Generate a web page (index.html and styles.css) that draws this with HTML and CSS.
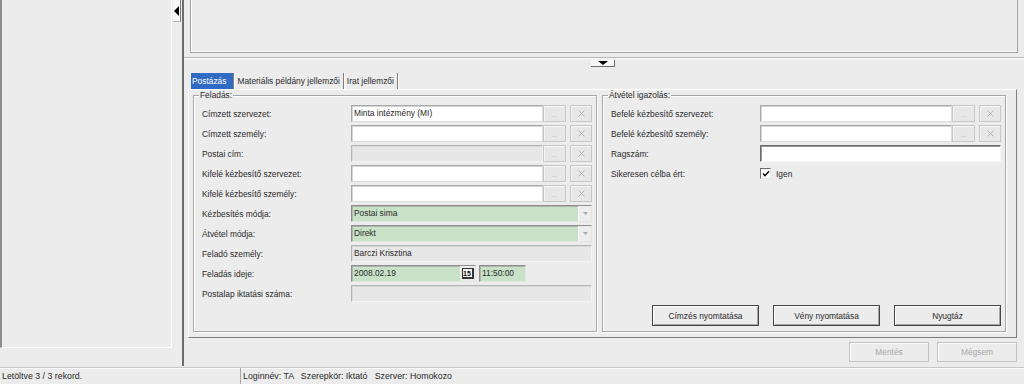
FILE: index.html
```html
<!DOCTYPE html>
<html lang="hu">
<head>
    <meta charset="UTF-8">
    <title>Postázás</title>
    <link rel="stylesheet" href="styles.css">
</head>
<body>
<div class="app">
    <div class="main">
        <div class="tree"></div>
        <div class="vsplit">
            <span class="vbtn"><svg width="5" height="10" viewBox="0 0 5 10"><polygon points="5,0 5,10 0,5" fill="#000"/></svg></span>
        </div>
        <div class="work">
            <div class="preview"></div>
            <div class="hsplit">
                <span class="hbtn"><svg width="10" height="4" viewBox="0 0 10 4"><polygon points="0,0 10,0 5,4" fill="#000"/></svg></span>
            </div>
            <div class="tabs">
                <span class="tab on">Postázás</span>
                <span class="tab">Materiális példány jellemzői</span>
                <span class="tab">Irat jellemzői</span>
            </div>
            <div class="tabpage">
                <fieldset class="group">
                    <legend>Feladás:</legend>
                    <div class="form">
                        <span class="lbl">Címzett szervezet:</span>
                        <div class="ctl"><span class="inp">Minta intézmény (MI)</span><span class="dots">...</span><span class="x"><svg width="7" height="7" viewBox="0 0 7 7"><path d="M0.5 0.5L6.5 6.5M6.5 0.5L0.5 6.5" stroke="#b4b4b4" stroke-width="1"/></svg></span></div>

                        <span class="lbl">Címzett személy:</span>
                        <div class="ctl"><span class="inp"></span><span class="dots">...</span><span class="x"><svg width="7" height="7" viewBox="0 0 7 7"><path d="M0.5 0.5L6.5 6.5M6.5 0.5L0.5 6.5" stroke="#b4b4b4" stroke-width="1"/></svg></span></div>

                        <span class="lbl">Postai cím:</span>
                        <div class="ctl"><span class="inp off"></span><span class="dots">...</span><span class="x"><svg width="7" height="7" viewBox="0 0 7 7"><path d="M0.5 0.5L6.5 6.5M6.5 0.5L0.5 6.5" stroke="#b4b4b4" stroke-width="1"/></svg></span></div>

                        <span class="lbl">Kifelé kézbesítő szervezet:</span>
                        <div class="ctl"><span class="inp"></span><span class="dots">...</span><span class="x"><svg width="7" height="7" viewBox="0 0 7 7"><path d="M0.5 0.5L6.5 6.5M6.5 0.5L0.5 6.5" stroke="#b4b4b4" stroke-width="1"/></svg></span></div>

                        <span class="lbl">Kifelé kézbesítő személy:</span>
                        <div class="ctl"><span class="inp"></span><span class="dots">...</span><span class="x"><svg width="7" height="7" viewBox="0 0 7 7"><path d="M0.5 0.5L6.5 6.5M6.5 0.5L0.5 6.5" stroke="#b4b4b4" stroke-width="1"/></svg></span></div>

                        <span class="lbl">Kézbesítés módja:</span>
                        <div class="ctl"><span class="inp green">Postai sima</span><span class="drop"><svg width="5" height="3" viewBox="0 0 5 3"><polygon points="0,0 5,0 2.5,3" fill="#a8a8a8"/></svg></span></div>

                        <span class="lbl">Átvétel módja:</span>
                        <div class="ctl"><span class="inp green">Direkt</span><span class="drop"><svg width="5" height="3" viewBox="0 0 5 3"><polygon points="0,0 5,0 2.5,3" fill="#a8a8a8"/></svg></span></div>

                        <span class="lbl">Feladó személy:</span>
                        <div class="ctl"><span class="inp off">Barczi Krisztina</span></div>

                        <span class="lbl">Feladás ideje:</span>
                        <div class="ctl"><span class="inp green date">2008.02.19<span class="cal"><span class="calico">15</span></span></span><span class="inp green time">11:50:00</span></div>

                        <span class="lbl">Postalap iktatási száma:</span>
                        <div class="ctl"><span class="inp off"></span></div>
                    </div>
                </fieldset>
                <fieldset class="group">
                    <legend>Átvétel igazolás:</legend>
                    <div class="form">
                        <span class="lbl">Befelé kézbesítő szervezet:</span>
                        <div class="ctl"><span class="inp"></span><span class="dots">...</span><span class="x"><svg width="7" height="7" viewBox="0 0 7 7"><path d="M0.5 0.5L6.5 6.5M6.5 0.5L0.5 6.5" stroke="#b4b4b4" stroke-width="1"/></svg></span></div>

                        <span class="lbl">Befelé kézbesítő személy:</span>
                        <div class="ctl"><span class="inp"></span><span class="dots">...</span><span class="x"><svg width="7" height="7" viewBox="0 0 7 7"><path d="M0.5 0.5L6.5 6.5M6.5 0.5L0.5 6.5" stroke="#b4b4b4" stroke-width="1"/></svg></span></div>

                        <span class="lbl">Ragszám:</span>
                        <div class="ctl"><span class="inp sunk"></span></div>

                        <span class="lbl">Sikeresen célba ért:</span>
                        <div class="ctl chk"><span class="box"><svg width="8" height="8" viewBox="0 0 8 8"><path d="M1 3.5L3 5.8L7 1.2" stroke="#000" stroke-width="1.4" fill="none"/></svg></span>Igen</div>
                    </div>
                    <div class="btnrow">
                        <button class="btn">Címzés nyomtatása</button>
                        <button class="btn">Vény nyomtatása</button>
                        <button class="btn">Nyugtáz</button>
                    </div>
                </fieldset>
            </div>
            <div class="actions">
                <button class="btn dis">Mentés</button>
                <button class="btn dis">Mégsem</button>
            </div>
        </div>
    </div>
    <div class="status">
        <span class="seg first">Letöltve 3 / 3 rekord.</span>
        <span class="seg">Loginnév: TA   Szerepkör: Iktató   Szerver: Homokozo</span>
    </div>
</div>
</body>
</html>
```

FILE: styles.css
```css
*{box-sizing: border-box;}
body{margin: 0;background: #ececec;font-family: "Liberation Sans", Arial, sans-serif;font-size: 8.4px;color: #2a2a2a;}

.app{width: 1024px;height: 384px;display: flex;flex-direction: column;overflow: hidden;}
.main{height: 367px;display: flex;}

/* bal oldali lista */
.tree{width: 172px;height: 348px;border-left: 2px solid #8e8e8e;border-right: 1px solid #fff;border-bottom: 1px solid #fff;}
.vsplit{width: 10px;padding-left: 1px;}
.vbtn{display: flex;align-items: center;justify-content: center;width: 8px;height: 22px;background: #f7f7f7;border-right: 1px solid #7a7a7a;border-bottom: 1px solid #b8b8b8;}

/* jobb oldal */
.work{flex: 1;border-left: 2px solid #6c6c6c;padding: 0 6px 0 4px;display: flex;flex-direction: column;}
.preview{height: 53px;margin-left: 2px;border: 1px solid #a3a3a3;border-top: none;box-shadow: inset 1px 0 0 #fff, inset 0 -1px 0 #fff;}
.hsplit{height: 19px;padding-top: 4px;display: flex;flex-direction: column;align-items: center;}
.hsplit:before{content: "";align-self: stretch;margin: 0 -6px 0 -4px;border-top: 1px solid #b6b6b6;border-bottom: 1px solid #fff;}
.hbtn{margin-top: 1px;width: 24px;height: 7px;background: #f7f7f7;border-right: 1px solid #6e6e6e;border-bottom: 1px solid #6e6e6e;display: flex;align-items: center;justify-content: center;}

.tabs{height: 17px;display: flex;padding: 0 0 0 3px;}
.tab{padding: 0 3px;line-height: 17px;border-right: 1px solid #7e7e7e;box-shadow: 1px 0 0 #fff;height: 16px;margin-top: 1px;}
.tab.on{background: #316ac5;color: #fff;padding: 0 7px 0 1px;}

.tabpage{height: 249px;display: flex;gap: 5px;padding: 0 10px 5px 4px;border: 1px solid;border-color: #fff #7c7c7c #7c7c7c #fff;margin-right: 1px;}

.group{margin: 0;width: 404px;min-width: 0;padding: 5px 4px 5px 8px;border: 1px solid #a6a6a6;box-shadow: inset 1px 1px 0 #fff, 1px 1px 0 #fff;display: flex;flex-direction: column;}
.group legend{padding: 0 1px;margin-left: -3px;line-height: 10px;background: #ececec;}

.form{display: grid;grid-template-columns: 149px 1fr;grid-auto-rows: 17px;row-gap: 3px;align-items: center;}
.lbl{white-space: nowrap;}
.ctl{display: flex;height: 17px;}

.inp{flex: 1;height: 17px;background: #fff;border: 1px solid;border-color: #a9a9a9 #dcdcdc #dcdcdc #a9a9a9;box-shadow: inset 1px 1px 0 #d4d4d4;padding: 0 2px;line-height: 15px;white-space: nowrap;}
.inp.off{background: #e7e7e7;border-color: #b4b4b4 #f4f4f4 #f4f4f4 #b4b4b4;box-shadow: inset 1px 1px 0 #dadada;}
.inp.green{background: #c8e2c8;border-color: #8e8e8e #e4e4e4 #e4e4e4 #8e8e8e;box-shadow: inset 1px 1px 0 #b2b2b2;}
.inp.sunk{border-color: #6a6a6a #f8f8f8 #f8f8f8 #6a6a6a;box-shadow: inset 1px 1px 0 #9a9a9a;}
.inp.date{flex: none;width: 125px;display: flex;justify-content: space-between;padding-right: 0;}
.inp.time{flex: none;width: 47px;margin-left: 3px;}

.dots,.x{height: 17px;background: #e7e7e7;border: 1px solid #c6c6c6;box-shadow: inset 1px 1px 0 #f6f6f6;}
.dots{width: 23px;text-align: center;color: #b2b2b2;line-height: 17px;font-size: 7px;}
.x{width: 22px;margin-left: 4px;display: flex;align-items: center;justify-content: center;}
.drop{width: 13px;height: 15px;margin: 1px 1px 0 -14px;background: #ededed;border-left: 1px solid #f8f8f8;display: flex;align-items: center;justify-content: center;}

.cal{width: 15px;height: 15px;background: #ececec;display: flex;align-items: center;justify-content: center;}
.calico{width: 12px;height: 11px;border: 1px solid #333;border-bottom-width: 2px;border-right-width: 2px;background: #f4f4f4;font-size: 7px;font-weight: bold;line-height: 9px;text-align: center;color: #111;}

.chk{align-items: center;gap: 5px;}
.box{width: 11px;height: 11px;background: #fff;border: 1px solid;border-color: #6c6c6c #e8e8e8 #e8e8e8 #6c6c6c;display: flex;align-items: center;justify-content: center;}

.btnrow{margin-top: auto;display: flex;justify-content: flex-end;gap: 14px;}
.btn{font: inherit;color: #2a2a2a;height: 21px;width: 107px;padding: 0;background: #ececec;border: 1px solid #444;box-shadow: inset 1px 1px 0 #fff, inset -1px -1px 0 #a6a6a6;}

.actions{margin-top: 4px;display: flex;justify-content: flex-end;gap: 8px;margin-right: 1px;}
.btn.dis{width: 80px;height: 20px;color: #a8a8a8;border-color: #c2c2c2;box-shadow: inset 1px 1px 0 #fafafa;}

/* állapotsor */
.status{height: 17px;margin-top: 1px;border-top: 1px solid #c6c6c6;box-shadow: inset 0 1px 0 #fafafa;display: flex;font-size: 8.8px;}
.seg{padding: 2px 0 0 2px;line-height: 13px;white-space: pre;}
.seg.first{width: 241px;border-right: 1px solid #a6a6a6;}
```
